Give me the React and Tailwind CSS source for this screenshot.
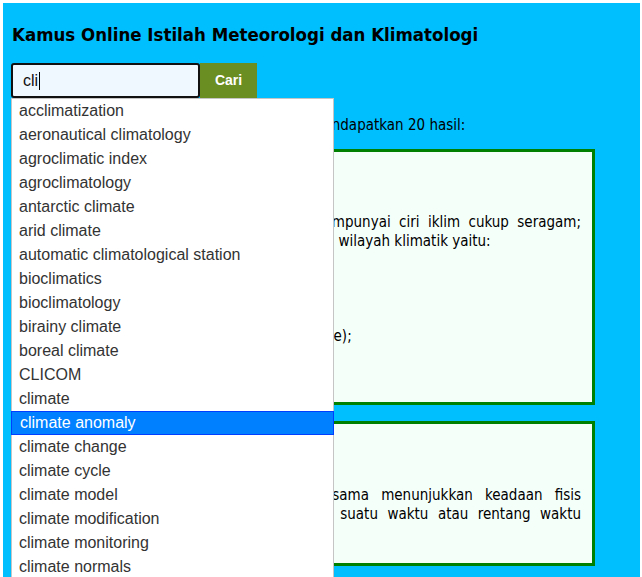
const items = [
  "acclimatization",
  "aeronautical climatology",
  "agroclimatic index",
  "agroclimatology",
  "antarctic climate",
  "arid climate",
  "automatic climatological station",
  "bioclimatics",
  "bioclimatology",
  "birainy climate",
  "boreal climate",
  "CLICOM",
  "climate",
  "climate anomaly",
  "climate change",
  "climate cycle",
  "climate model",
  "climate modification",
  "climate monitoring",
  "climate normals",
  "climate prediction",
  "climate zone",
];

const body = { fontFamily: '"DejaVu Sans Condensed", "DejaVu Sans", sans-serif' };
const arial = { fontFamily: '"Liberation Sans", Arial, sans-serif' };

function Line({ children, last, className = "" }) {
  return (
    <div className={(last ? "text-left " : "text-justify [text-align-last:justify] ") + className}>
      {children}
    </div>
  );
}

export default function App() {
  return (
    <div className="h-[577px] overflow-hidden bg-white pt-[3px] pl-[3px] pr-[2px]">
      <div className="relative h-[574px] bg-[#00bfff] pl-[8px] pt-[20px] text-black" style={body}>
        {/* Header */}
        <h1 className="text-[18.5px] leading-[24px] font-bold pl-[1px]">
          Kamus Online Istilah Meteorologi dan Klimatologi
        </h1>

        {/* Search */}
        <div className="relative mt-[16px] flex">
          <div
            className="flex h-[35px] w-[189px] items-center rounded-[3px] border-2 border-[#111] bg-[#f0f8ff] pl-[10px] text-[16px] text-[#111]"
            style={arial}
          >
            cli<span className="ml-[1px] inline-block h-[18px] w-px bg-black" />
          </div>
          <button
            className="h-[35px] w-[57px] bg-[#6b8e23] text-[14px] font-bold text-white"
            style={arial}
          >
            Cari
          </button>

          {/* Autocomplete menu */}
          <ul
            className="absolute left-0 top-[35px] z-10 w-[323px] border border-[#c5c5c5] bg-white text-[16px] text-[#333]"
            style={arial}
          >
            {items.map((t) =>
              t === "climate anomaly" ? (
                <li
                  key={t}
                  className="-mx-px h-[24px] border border-[#003eff] bg-[#007fff] pl-[8px] leading-[22px] text-white"
                >
                  {t}
                </li>
              ) : (
                <li key={t} className="h-[24px] pl-[7px] leading-[24px]">
                  {t}
                </li>
              )
            )}
          </ul>
        </div>

        <p className="mt-[17px] text-[15px] leading-[20px] pl-[3px]">
          Pencarian dengan kata kunci "cli" di kamus mendapatkan 20 hasil:
        </p>

        {/* Results */}
        <div className="mt-[14px] flex flex-col gap-[16px] text-[15px] leading-[19px]">
          <div className="h-[256px] w-[584px] border-[3px] border-[#008000] bg-[#f5fffa] px-[11px] pt-[12px]">
            <div className="font-bold">climatic region</div>
            <div className="text-[#444]">wilayah iklim</div>
            <div className="mt-[11px]">
              <Line className="-ml-[12px]">
                Suatu wilayah di permukaan bumi yang mempunyai ciri iklim cukup seragam;
              </Line>
              <Line last className="ml-[5px]">
                berdasarkan klasifikasi Köppen terdapat lima wilayah klimatik yaitu:
              </Line>
            </div>
            <div className="pl-[20px]">
              <div>a. iklim tropis (A);</div>
              <div>b. iklim kering (B);</div>
              <div>c. iklim sedang hangat (C);</div>
              <div>d. iklim sedang dingin (D);</div>
              <div>e. iklim kutub dan salju abadi (polar climate);</div>
            </div>
          </div>

          <div className="h-[145px] w-[584px] border-[3px] border-[#008000] bg-[#f5fffa] px-[11px] pt-[12px]">
            <div className="font-bold">climate</div>
            <div className="text-[#444]">iklim</div>
            <div className="mt-[12px]">
              <Line className="ml-[24px]">
                Sintesis cuaca yang secara bersama-sama menunjukkan keadaan fisis
              </Line>
              <Line className="-ml-[14px]">
                atmosfer suatu tempat selama <span className="text-[#66b3ff]">pengamatan</span> suatu waktu atau rentang waktu
              </Line>
              <Line last>tertentu.</Line>
            </div>
          </div>
        </div>
      </div>
    </div>
  );
}
